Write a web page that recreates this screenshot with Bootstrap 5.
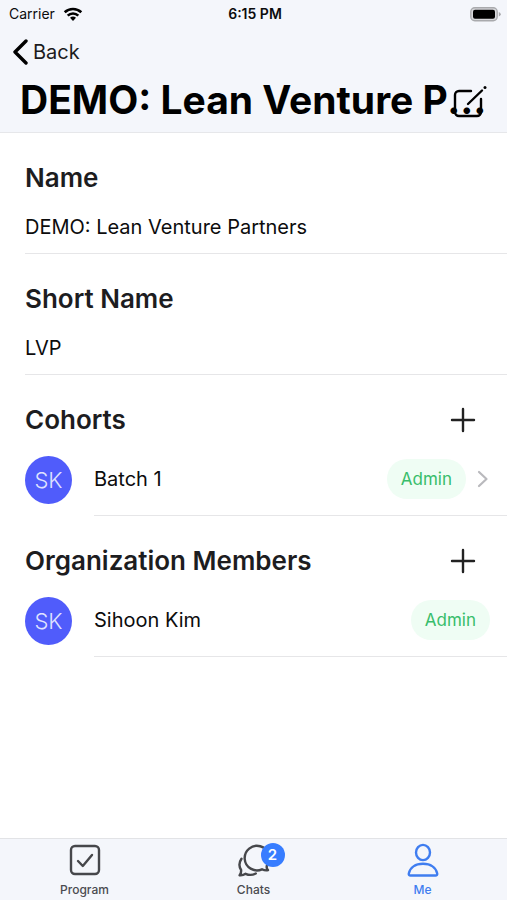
<!DOCTYPE html>
<html lang="en">
<head>
<meta charset="utf-8">
<meta name="viewport" content="width=device-width, initial-scale=1">
<title>Organization</title>
<link href="https://cdn.jsdelivr.net/npm/bootstrap@5.3.0/dist/css/bootstrap.min.css" rel="stylesheet">
<style>
body { font-family: Inter, "Liberation Sans", sans-serif; color: #0c0c0d; font-size: 20px; line-height: 28px; background: #fff; }
svg { display: block; }
.bar { background: #f4f6fb; }
.top-bar { border-bottom: 1px solid #e6e7ea; padding-bottom: 8px; }
.status { height: 28px; padding: 0 6px 0 9px; font-size: 14px; line-height: 28px; }
.status-time { font-weight: 600; }
.back { height: 48px; padding-left: 12px; color: #1c1c1e; }
.back svg { margin-right: 5px; }
.page-title { font-size: 39px; line-height: 48px; font-weight: 700; color: #000; padding-left: 20px; margin-right: 20px; }
.edit-btn { right: 20px; bottom: 13px; }
.section { padding-left: 25px; }
.section-head { padding: 27px 29px 0 0; }
.section-head h2 { font-size: 26px; line-height: 36px; font-weight: 600; color: #1d1d1f; }
.field { margin-top: 17px; padding-bottom: 12px; border-bottom: 1px solid #e6e6e8; }
.person { margin-top: 18px; }
.avatar { width: 47px; height: 48px; font-size: 22px; font-weight: 300; color: #dfe1ff; background: #505cfb; margin-right: 22px; }
.person-body { height: 60px; padding: 0 17px 13px 0; border-bottom: 1px solid #e6e6e8; }
.role { font-size: 17px; line-height: 24px; font-weight: 400; color: #38bd6b; background: #effdf4; padding: 8px 14px; }
.tab-bar { border-top: 1px solid #e2e3e6; height: 62px; }
.tab { font-size: 12px; line-height: 16px; font-weight: 500; color: #4a4b50; padding-top: 4px; }
.tab svg { margin-bottom: 5px; }
.tab.active { color: #3f7df0; }
.count { left: 24px; top: 0; width: 24px; height: 24px; font-size: 15px; line-height: 24px; font-weight: 600; color: #fff; background: #377dff; text-align: center; }
</style>
<script src="https://cdn.jsdelivr.net/npm/bootstrap@5.3.0/dist/js/bootstrap.bundle.min.js"></script>
</head>
<body class="d-flex flex-column min-vh-100">
<header class="bar top-bar position-relative">
  <div class="status row g-0 align-items-center">
    <div class="col d-flex align-items-center gap-2">
      <span>Carrier</span>
      <svg width="20" height="15" viewBox="0 0 20 15" fill="none" stroke="#000" stroke-width="2.6"><path d="M1.7 5.3a12 12 0 0 1 16.6 0M4.7 8.6a7.6 7.6 0 0 1 10.6 0"/><path d="M7 10.8a4.4 4.4 0 0 1 6 0L10 14z" fill="#000" stroke="none"/></svg>
    </div>
    <div class="col-auto status-time">6:15 PM</div>
    <div class="col d-flex justify-content-end">
      <svg width="31" height="15" viewBox="0 0 31 15"><rect x=".8" y=".8" width="26.4" height="13" rx="4" fill="#d8d9dc" stroke="#a9aaad" stroke-width="1.4"/><rect x="3" y="2.8" width="22" height="9" rx="2" fill="#000"/><path d="M28.8 5v4.6q2-.8 2-2.3t-2-2.3z" fill="#a9aaad"/></svg>
    </div>
  </div>
  <a href="#" class="back d-inline-flex align-items-center text-decoration-none">
    <svg width="16" height="26" viewBox="0 0 16 26" fill="none" stroke="#000" stroke-width="3.4" stroke-linecap="round" stroke-linejoin="round"><path d="M14 2 3 13l11 11"/></svg>Back
  </a>
  <h1 class="page-title text-truncate mb-0">DEMO: Lean Venture Partners</h1>
  <button type="button" class="edit-btn btn p-0 border-0 position-absolute" aria-label="Edit">
    <svg width="36" height="34" viewBox="0 0 36 34" fill="none" stroke="#000" stroke-width="2.4" stroke-linecap="round" stroke-linejoin="round"><path d="M20 6H8a4 4 0 0 0-4 4v17a4 4 0 0 0 4 4h18a4 4 0 0 0 4-4V14"/><path d="M17 19 31 5.500"/><path d="M34 2.500v.1" stroke-width="3"/></svg>
  </button>
</header>
<main class="flex-grow-1">
  <section class="section">
    <div class="section-head"><h2 class="mb-0">Name</h2></div>
    <div class="field">DEMO: Lean Venture Partners</div>
  </section>
  <section class="section">
    <div class="section-head"><h2 class="mb-0">Short Name</h2></div>
    <div class="field">LVP</div>
  </section>
  <section class="section">
    <div class="section-head d-flex justify-content-between align-items-center">
      <h2 class="mb-0">Cohorts</h2>
      <button type="button" class="btn p-0 border-0" aria-label="Add cohort"><svg width="30" height="30" viewBox="0 0 30 30" stroke="#222" stroke-width="2.4" stroke-linecap="round"><path d="M15 4v22M4 15h22"/></svg></button>
    </div>
    <div class="person d-flex">
      <div class="avatar rounded-circle d-flex align-items-center justify-content-center">SK</div>
      <div class="person-body flex-grow-1 d-flex align-items-center">
        <span class="me-auto">Batch 1</span>
        <span class="role badge rounded-pill">Admin</span>
        <svg class="ms-2" width="16" height="20" viewBox="0 0 16 20" fill="none" stroke="#b9b9bd" stroke-width="2.2" stroke-linecap="round" stroke-linejoin="round"><path d="M5 3l7.5 7L5 17"/></svg>
      </div>
    </div>
  </section>
  <section class="section">
    <div class="section-head d-flex justify-content-between align-items-center">
      <h2 class="mb-0">Organization Members</h2>
      <button type="button" class="btn p-0 border-0" aria-label="Add member"><svg width="30" height="30" viewBox="0 0 30 30" stroke="#222" stroke-width="2.4" stroke-linecap="round"><path d="M15 4v22M4 15h22"/></svg></button>
    </div>
    <div class="person d-flex">
      <div class="avatar rounded-circle d-flex align-items-center justify-content-center">SK</div>
      <div class="person-body flex-grow-1 d-flex align-items-center">
        <span class="me-auto">Sihoon Kim</span>
        <span class="role badge rounded-pill">Admin</span>
      </div>
    </div>
  </section>
</main>
<nav class="bar tab-bar row g-0 sticky-bottom">
  <a href="#" class="tab col d-flex flex-column align-items-center text-decoration-none">
    <svg width="34" height="34" viewBox="0 0 34 34" fill="none" stroke="#46474b" stroke-width="2.4" stroke-linecap="round" stroke-linejoin="round"><rect x="3" y="3" width="28" height="28" rx="4"/><path d="M10 18l4.8 5L24 12"/></svg>Program
  </a>
  <a href="#" class="tab col d-flex flex-column align-items-center text-decoration-none">
    <span class="position-relative">
      <svg width="34" height="34" viewBox="0 0 34 34" fill="none" stroke="#46474b" stroke-width="2.4" stroke-linecap="round" stroke-linejoin="round"><path d="M31 27.2c-1.500-1.500-1.600-3.200-1-5A12.300 12.300 0 1 0 25 26.300c2 1 4 1.400 6 .9z"/><path d="M4.500 15.800c-2.600 3.800-2.600 7.800-.4 11.200.2 1.800-.3 3.700-1.500 5.200 2.200.2 4.300-.3 6-1.400 3.500 1.600 7 1.400 10.200-.3"/></svg>
      <span class="count position-absolute rounded-pill">2</span>
    </span>Chats
  </a>
  <a href="#" class="tab active col d-flex flex-column align-items-center text-decoration-none" aria-current="page">
    <svg width="34" height="34" viewBox="0 0 34 34" fill="none" stroke="#3f7df0" stroke-width="2.400" stroke-linejoin="round"><ellipse cx="17" cy="9.500" rx="7" ry="7.600"/><path d="M4.500 32.500h25q2 0 1.700-2C30 24.500 24.500 20.800 17 20.800S4 24.500 2.800 30.500q-.3 2 1.700 2z"/></svg>Me
  </a>
</nav>
</body>
</html>
